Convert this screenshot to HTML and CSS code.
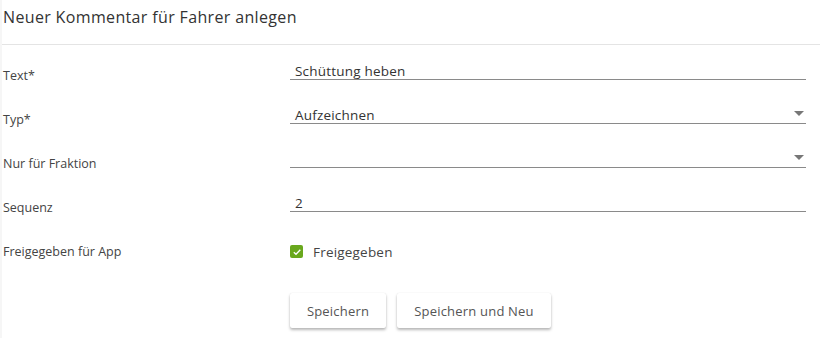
FILE: index.html
```html
<!DOCTYPE html>
<html lang="de">
<head>
  <meta charset="UTF-8" />
  <title>Neuer Kommentar für Fahrer anlegen</title>
  <link rel="stylesheet" href="styles.css">
</head>
<body>
  <div class="dialog">
    <header class="dialog-header">
      <h1>Neuer Kommentar für Fahrer anlegen</h1>
    </header>

    <form class="form">
      <div class="form-row">
        <label class="form-label">Text*</label>
        <div class="field">
          <span class="field-value">Schüttung heben</span>
        </div>
      </div>

      <div class="form-row">
        <label class="form-label">Typ*</label>
        <div class="field select">
          <span class="field-value">Aufzeichnen</span>
          <span class="arrow"></span>
        </div>
      </div>

      <div class="form-row">
        <label class="form-label">Nur für Fraktion</label>
        <div class="field select">
          <span class="field-value"></span>
          <span class="arrow"></span>
        </div>
      </div>

      <div class="form-row">
        <label class="form-label">Sequenz</label>
        <div class="field">
          <span class="field-value">2</span>
        </div>
      </div>

      <div class="form-row">
        <label class="form-label">Freigegeben für App</label>
        <div class="check">
          <span class="check-box">
            <svg width="10" height="10" viewBox="0 0 10 10"><path d="M1.8 5.2 L4 7.3 L8.3 2.8" fill="none" stroke="#fff" stroke-width="1.3"/></svg>
          </span>
          <span class="check-label">Freigegeben</span>
        </div>
      </div>

      <div class="actions">
        <button type="button" class="btn btn-save">Speichern</button>
        <button type="button" class="btn btn-new">Speichern und Neu</button>
      </div>
    </form>
  </div>
</body>
</html>
```

FILE: styles.css
```css
* {
  box-sizing: border-box;
  margin: 0;
  padding: 0;
}

html, body {
  background: #ffffff;
  font-family: 'Open Sans', sans-serif;
  color: #444;
}

.dialog {
  height: 338px;
  border-left: 2px solid #f6f6f6;
}

.dialog-header {
  height: 45px;
  padding: 7px 1px 0;
  border-bottom: 1px solid #e4e4e4;
}

.dialog-header h1 {
  font-size: 16px;
  font-weight: 400;
  letter-spacing: 0.35px;
  color: #333;
  line-height: 21px;
}

.form {
  padding-top: 8px;
}

.form-row {
  display: grid;
  grid-template-columns: 288px 516px;
  height: 44px;
}

.form-label {
  font-size: 12.5px;
  line-height: 44px;
  padding: 1px 0 0 1px;
  color: #444;
}

.field {
  position: relative;
  height: 27px;
  padding: 11px 0 0 5px;
  border-bottom: 1px solid #8a8a8a;
}

.field-value {
  font-size: 13.5px;
  line-height: 15px;
  letter-spacing: 0.2px;
  color: #333;
  display: block;
}

.arrow {
  position: absolute;
  right: 2px;
  top: 14px;
  width: 0;
  height: 0;
  border-left: 5px solid transparent;
  border-right: 5px solid transparent;
  border-top: 5px solid #777;
}

.check {
  display: flex;
  align-items: center;
  gap: 10px;
  padding-top: 10px;
  height: 35px;
}

.check-box {
  width: 13px;
  height: 13px;
  border-radius: 2px;
  background: #69a81d;
  display: flex;
  align-items: center;
  justify-content: center;
}

.check-label {
  font-size: 13.5px;
  letter-spacing: 0.2px;
  color: #444;
}

.actions {
  display: flex;
  gap: 11px;
  padding: 20px 0 0 288px;
}

.btn {
  height: 35px;
  border: none;
  background: #fff;
  font-family: 'Open Sans', sans-serif;
  font-size: 13px;
  letter-spacing: 0.2px;
  color: #555;
  box-shadow: 0 2px 3px rgba(0, 0, 0, 0.28), 0 0 1px rgba(0, 0, 0, 0.12);
  border-radius: 2px;
}

.btn-save {
  width: 96px;
}

.btn-new {
  width: 154px;
}
```
